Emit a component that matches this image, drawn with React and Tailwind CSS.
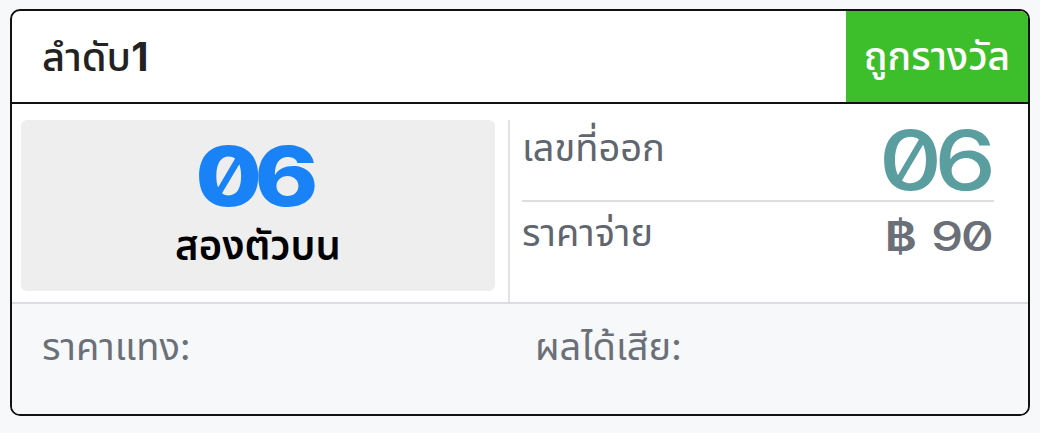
import React from 'react';

const font = { fontFamily: "Inter, 'Noto Sans Thai', 'Noto Sans', sans-serif" };

const App = () => {
  return (
    <div className="w-[1040px] h-[433px] bg-[#f7f8fa] pt-[9px] pl-[10px]" style={font}>
      <div className="w-[1020px] h-[407px] border-2 border-[#111] rounded-[10px] overflow-hidden flex flex-col bg-white">
        {/* Header */}
        <div className="h-[93px] shrink-0 flex items-stretch justify-between border-b-2 border-[#111]">
          <div className="pl-[30px] flex items-center text-[40px] font-medium text-[#222]">
            ลำดับ<span className="font-bold">1</span>
          </div>
          <div className="w-[182px] bg-[#3dbf2c] flex items-center justify-center text-white text-[39px] font-medium">
            ถูกรางวัล
          </div>
        </div>

        {/* Result */}
        <div className="h-[200px] shrink-0 flex pt-[16px] border-b-2 border-[#dcdde0]">
          <div className="w-[496px] pl-[9px] pr-[13px] pb-[11px]">
            <div className="h-full bg-[#eeeeee] rounded-[6px] flex flex-col items-center pt-[16px]">
              <div className="inline-block mr-[10px] scale-x-[1.18] text-[82px] leading-none font-extrabold text-[#1a82f7] slashed-zero tracking-[-0.08em]">06</div>
              <div className="mt-[8px] text-[40px] leading-none font-semibold text-black">สองตัวบน</div>
            </div>
          </div>
          <div className="flex-1 border-l-2 border-[#e2e3e5] pl-[12px] pr-[34px]">
            <div className="flex items-start justify-between border-b-2 border-[#dcdde0] h-[82px]">
              <div className="mt-[8px] text-[38px] leading-none text-[#5f6670]">เลขที่ออก</div>
              <div className="inline-block origin-right mr-[6px] scale-x-[1.2] text-[82px] leading-none font-medium text-[#5a9ea0] slashed-zero tracking-[-0.08em]">06</div>
            </div>
            <div className="flex items-start justify-between">
              <div className="mt-[11px] text-[38px] leading-none text-[#5f6670]">ราคาจ่าย</div>
              <div className="mt-[14px] flex items-center gap-[26px] text-[41px] leading-none font-medium text-[#6b7078] slashed-zero">
                <span className="inline-block origin-right scale-x-[1.2] font-semibold">฿</span>
                <span className="inline-block origin-right mr-[3px] scale-x-[1.25] tracking-[-0.05em]">90</span>
              </div>
            </div>
          </div>
        </div>

        {/* Footer */}
        <div className="flex-1 bg-[#f7f8fa] flex pt-[23px]">
          <div className="w-[523px] pl-[30px] text-[38px] leading-none text-[#6b7078]">ราคาแทง:</div>
          <div className="text-[38px] leading-none text-[#6b7078]">ผลได้เสีย:</div>
        </div>
      </div>
    </div>
  );
};

export default App;
